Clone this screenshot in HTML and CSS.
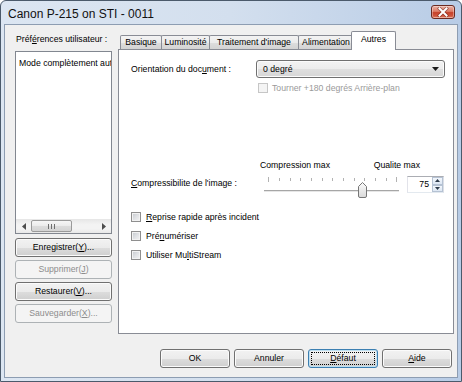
FILE: index.html
```html
<!DOCTYPE html>
<html lang="fr">
<head>
<meta charset="utf-8">
<title>Canon P-215 on STI - 0011</title>
<link rel="stylesheet" href="styles.css">
</head>
<body>
<div class="window">
  <div class="titlebar">
    <span class="title">Canon P-215 on STI - 0011</span>
    <button class="close" aria-label="Fermer">
      <svg width="12" height="10" viewBox="0 0 12 10">
        <path d="M2.5 1.5 L9.5 8.5 M9.5 1.5 L2.5 8.5" stroke="#5b1a12" stroke-width="3.4" stroke-linecap="square" opacity="0.55"/>
        <path d="M2.5 1.5 L9.5 8.5 M9.5 1.5 L2.5 8.5" stroke="#ffffff" stroke-width="2" stroke-linecap="square"/>
      </svg>
    </button>
  </div>
  <div class="client">
    <div class="main">
      <div class="side">
        <div class="side-label">Préf<u>é</u>rences utilisateur :</div>
        <div class="listbox">
          <div class="list-items">
            <div class="list-item">Mode complètement automatique</div>
          </div>
          <div class="hscroll">
            <span class="sb-arrow">
              <svg width="4" height="7" viewBox="0 0 4 7"><path d="M4 0 L0 3.5 L4 7 Z" fill="#4d4d4d"/></svg>
            </span>
            <span class="sb-thumb">
              <svg width="7" height="5" viewBox="0 0 7 5"><path d="M0.5 0 V5 M3.5 0 V5 M6.5 0 V5" stroke="#6f6f6f" stroke-width="1"/></svg>
            </span>
            <span class="sb-track"></span>
            <span class="sb-arrow">
              <svg width="4" height="7" viewBox="0 0 4 7"><path d="M0 0 L4 3.5 L0 7 Z" fill="#4d4d4d"/></svg>
            </span>
          </div>
        </div>
        <div class="side-buttons">
          <button class="btn">Enregistrer(<u>Y</u>)...</button>
          <button class="btn" disabled>Supprimer(<u>J</u>)</button>
          <button class="btn">Restaurer(<u>V</u>)...</button>
          <button class="btn" disabled>Sauvegarder(<u>X</u>)...</button>
        </div>
      </div>
      <div class="tabs">
        <div class="tabstrip">
          <div class="tab tab-basique">Basique</div>
          <div class="tab tab-lum">Luminosité</div>
          <div class="tab tab-trait">Traitement d'image</div>
          <div class="tab tab-alim">Alimentation</div>
          <div class="tab tab-autres selected">Autres</div>
        </div>
        <div class="panel">
          <div class="row-orient">
            <span class="row-label">Orientation du doc<u>u</u>ment :</span>
            <div class="combo">
              <span>0 degré</span>
              <svg width="7" height="4" viewBox="0 0 7 4"><path d="M0 0 H7 L3.5 4 Z" fill="#1a1a1a"/></svg>
            </div>
          </div>
          <div class="check-row rotate disabled">
            <span class="cb"></span>
            <span>Tourner +180 degrés Arrière-plan</span>
          </div>
          <div class="scale-labels">
            <span>Compression max</span>
            <span>Qualite max</span>
          </div>
          <div class="row-compress">
            <span class="compress-label"><u>C</u>ompressibilite de l'image :</span>
            <svg class="slider" width="138" height="24" viewBox="0 0 138 24">
              <g stroke="#b2b2b2" stroke-width="1">
                <path d="M6.5 2 V7 M17.5 3 V6 M28.5 3 V6 M38.5 3 V6 M49.5 3 V6 M60.5 3 V6 M70.5 3 V6 M81.5 3 V6 M92.5 3 V6 M102.5 3 V6 M113.5 3 V6 M124.5 3 V6 M134.5 2 V7"/>
              </g>
              <path d="M2 15.5 H137" stroke="#a6a6a6" stroke-width="1"/>
              <path d="M2 16.5 H137" stroke="#e6e6e6" stroke-width="1"/>
              <defs>
                <linearGradient id="thumbg" x1="0" y1="0" x2="0" y2="1">
                  <stop offset="0" stop-color="#fbfbfb"/>
                  <stop offset="1" stop-color="#d9d9d9"/>
                </linearGradient>
              </defs>
              <path d="M96.5 11.5 L100.5 7.5 L104.5 11.5 L104.5 21 Q104.5 22.5 103 22.5 L98 22.5 Q96.5 22.5 96.5 21 Z" fill="url(#thumbg)" stroke="#767676" stroke-width="1"/>
            </svg>
            <div class="spin">
              <span class="spin-value">75</span>
              <span class="spin-btns">
                <span class="spin-btn">
                  <svg width="5" height="3" viewBox="0 0 5 3"><path d="M0 3 L2.5 0 L5 3 Z" fill="#2d3a4a"/></svg>
                </span>
                <span class="spin-btn">
                  <svg width="5" height="3" viewBox="0 0 5 3"><path d="M0 0 L5 0 L2.5 3 Z" fill="#2d3a4a"/></svg>
                </span>
              </span>
            </div>
          </div>
          <div class="check-list">
            <div class="check-row"><span class="cb"></span><span><u>R</u>eprise rapide après incident</span></div>
            <div class="check-row"><span class="cb"></span><span>Pré<u>n</u>umériser</span></div>
            <div class="check-row"><span class="cb"></span><span>Utiliser Mu<u>l</u>tiStream</span></div>
          </div>
        </div>
      </div>
    </div>
    <div class="footer">
      <button class="btn fbtn">OK</button>
      <button class="btn fbtn">Annuler</button>
      <button class="btn fbtn default"><u>D</u>éfaut</button>
      <button class="btn fbtn"><u>A</u>ide</button>
    </div>
  </div>
</div>
</body>
</html>
```

FILE: styles.css
```css
* {
  box-sizing: border-box;
}

html,
body {
  margin: 0;
  padding: 0;
}

body {
  width: 462px;
  height: 382px;
  overflow: hidden;
  font-family: "Liberation Sans", Arial, sans-serif;
  font-size: 8.7px;
  color: #000;
  background: #ffffff;
}

u {
  text-decoration: underline;
  text-underline-offset: 1px;
}

.window {
  width: 462px;
  height: 382px;
  border: 1px solid #4b5a6b;
  border-radius: 6px 6px 0 0;
  background: linear-gradient(to right, #dce6f2 0%, #d3dfee 50%, #b8cce6 100%);
  padding: 0 3px 3px;
  display: flex;
  flex-direction: column;
}

.titlebar {
  height: 23px;
  display: flex;
  align-items: flex-start;
  justify-content: space-between;
  padding-left: 4px;
}

.title {
  margin-top: 6px;
  font-size: 12px;
  line-height: 14px;
  color: #111;
}

.close {
  margin: 4px 3px 0 0;
  width: 24px;
  height: 14px;
  padding: 0;
  border: 1px solid #6b2a20;
  border-radius: 3px;
  background: linear-gradient(#eab1a4 0%, #dd7c66 45%, #c6412a 55%, #d1583f 85%, #e58d72 100%);
  box-shadow: inset 0 0 0 1px rgba(255, 255, 255, 0.35);
  display: flex;
  align-items: center;
  justify-content: center;
}

.client {
  flex: 1;
  border: 1px solid #8d9db2;
  background: #f0f0f0;
  display: flex;
  flex-direction: column;
}

.main {
  display: flex;
  gap: 6px;
  padding: 6px 0 0 10px;
}

.side {
  width: 97px;
  display: flex;
  flex-direction: column;
}

.side-label {
  margin: 2px 0 6px 1px;
  line-height: 12px;
  white-space: nowrap;
}

.listbox {
  height: 183px;
  border: 1px solid #828790;
  background: #fff;
  display: flex;
  flex-direction: column;
}

.list-items {
  flex: 1;
  overflow: hidden;
  padding: 5px 0 0 3px;
}

.list-item {
  white-space: nowrap;
  line-height: 12px;
}

.hscroll {
  height: 14px;
  display: flex;
  align-items: center;
  background: linear-gradient(#e6e6e6, #f3f3f3 40%, #f3f3f3 70%, #e8e8e8);
}

.sb-arrow {
  width: 15px;
  height: 14px;
  display: flex;
  align-items: center;
  justify-content: center;
}

.sb-thumb {
  width: 41px;
  height: 12px;
  border: 1px solid #9a9a9a;
  border-radius: 2px;
  background: linear-gradient(#f6f6f6 0%, #ebebeb 50%, #dcdcdc 51%, #d4d4d4 100%);
  display: flex;
  align-items: center;
  justify-content: center;
}

.sb-track {
  flex: 1;
}

.side-buttons {
  margin-top: 4px;
  display: flex;
  flex-direction: column;
  gap: 3px;
}

.btn {
  height: 19px;
  padding: 0;
  font-family: inherit;
  font-size: 8.7px;
  color: #000;
  border: 1px solid #707070;
  border-radius: 3px;
  background: linear-gradient(#f2f2f2 0%, #ebebeb 50%, #dddddd 51%, #cfcfcf 100%);
  box-shadow: inset 0 0 0 1px #fbfbfb;
  text-align: center;
  line-height: 17px;
  white-space: nowrap;
}

.btn:disabled {
  color: #8d8d8d;
  border-color: #adb2b5;
  background: #f4f4f4;
  box-shadow: none;
}

.tabs {
  width: 336px;
  display: flex;
  flex-direction: column;
}

.tabstrip {
  height: 18px;
  display: flex;
  align-items: flex-end;
  padding-left: 3px;
}

.tab {
  height: 14px;
  margin-left: -1px;
  border: 1px solid #898c95;
  border-bottom: none;
  border-radius: 2px 2px 0 0;
  background: linear-gradient(#f3f3f3 0%, #ebebeb 50%, #dddddd 51%, #d3d3d3 100%);
  text-align: center;
  line-height: 13px;
  white-space: nowrap;
}

.tab-basique {
  width: 42px;
}

.tab-lum {
  width: 49px;
}

.tab-trait {
  width: 90px;
}

.tab-alim {
  width: 56px;
}

.tab-autres {
  width: 41px;
}

.tab.selected {
  position: relative;
  z-index: 1;
  width: 45px;
  height: 19px;
  margin: 0 -2px -1px -3px;
  padding-top: 1px;
  background: #ffffff;
}

.panel {
  height: 285px;
  border: 1px solid #898c95;
  background: #ffffff;
  padding: 10px 0 0 12px;
}

.row-orient {
  display: flex;
  align-items: center;
  height: 18px;
}

.row-label {
  width: 125px;
  white-space: nowrap;
}

.combo {
  width: 189px;
  height: 18px;
  border: 1px solid #707070;
  border-radius: 3px;
  background: linear-gradient(#f3f3f3 0%, #ececec 50%, #dfdfdf 51%, #d6d6d6 100%);
  box-shadow: inset 0 0 0 1px #fbfbfb;
  display: flex;
  align-items: center;
  justify-content: space-between;
  padding: 0 5px 0 6px;
}

.check-row {
  display: flex;
  align-items: center;
  gap: 5px;
  height: 12px;
  line-height: 12px;
  white-space: nowrap;
}

.cb {
  width: 10px;
  height: 10px;
  flex: none;
  border: 1px solid #8f8f8f;
  background: linear-gradient(135deg, #c3c7cc 0%, #dfe1e4 50%, #f4f4f4 100%);
  box-shadow: inset 0 0 0 1px #f2f2f2;
}

.rotate {
  margin: 4px 0 0 127px;
  gap: 4px;
}

.disabled {
  color: #9a9a9a;
}

.disabled .cb {
  border-color: #c6c6c6;
  background: #f4f4f4;
  box-shadow: none;
}

.scale-labels {
  margin: 65px 0 0 129px;
  width: 160px;
  display: flex;
  justify-content: space-between;
  line-height: 12px;
}

.row-compress {
  margin-top: 4px;
  display: flex;
  align-items: flex-start;
  height: 24px;
}

.compress-label {
  width: 131px;
  margin-top: 2px;
  line-height: 12px;
  white-space: nowrap;
}

.slider {
  display: block;
  flex: none;
}

.spin {
  margin: 1px 0 0 7px;
  width: 37px;
  height: 17px;
  border: 1px solid #abadb3;
  border-color: #abadb3 #dbdfe6 #e3e9ef #e2e3ea;
  background: #fff;
  display: flex;
}

.spin-value {
  flex: 1;
  text-align: right;
  padding-right: 3px;
  line-height: 15px;
}

.spin-btns {
  width: 11px;
  display: flex;
  flex-direction: column;
}

.spin-btn {
  flex: 1;
  border: 1px solid #b5c2d3;
  background: linear-gradient(#f3f7fc, #dde7f3);
  display: flex;
  align-items: center;
  justify-content: center;
}

.check-list {
  margin-top: 12px;
  display: flex;
  flex-direction: column;
  gap: 7px;
}

.footer {
  margin-top: 15px;
  display: flex;
  justify-content: flex-end;
  gap: 4px;
  padding-right: 5px;
}

.fbtn {
  width: 70px;
}

.default {
  border-color: #3c7fb1;
  box-shadow: inset 0 0 0 1px #bfe0f2;
  outline: 1px dotted #000;
  outline-offset: -4px;
}
```
